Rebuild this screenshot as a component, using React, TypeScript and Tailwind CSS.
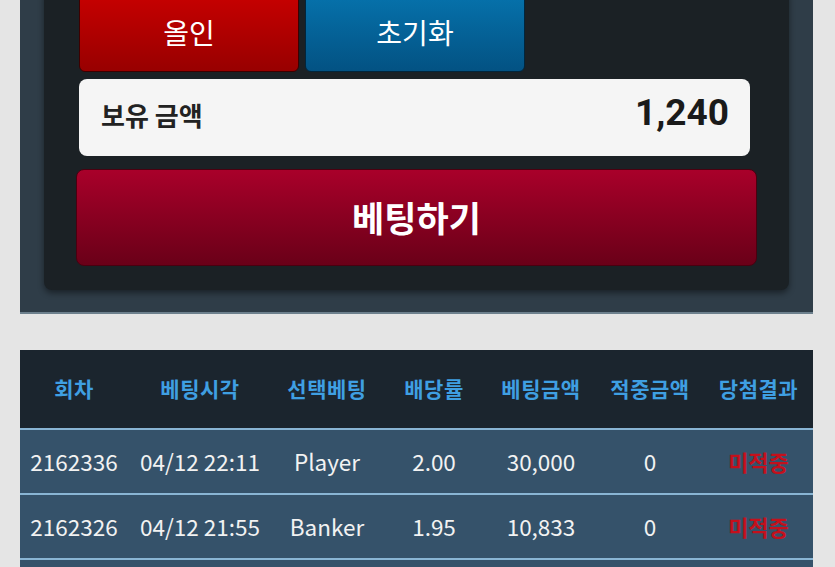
const rows = [
  { round: "2162336", time: "04/12 22:11", pick: "Player", odds: "2.00", bet: "30,000", win: "0", result: "미적중" },
  { round: "2162326", time: "04/12 21:55", pick: "Banker", odds: "1.95", bet: "10,833", win: "0", result: "미적중" },
];

const heads = ["회차", "베팅시각", "선택베팅", "배당률", "베팅금액", "적중금액", "당첨결과"];

const cols = "grid grid-cols-[108px_144px_110px_104px_110px_108px_109px]";

export default function App() {
  return (
    <div className="h-[567px] overflow-hidden bg-[#e5e5e5] font-['Noto_Sans_CJK_KR','Noto_Sans',sans-serif]">
      {/* bet panel */}
      <div className="mx-[20px] w-[793px] bg-[#2f3d48] border-b-2 border-[#6d808d] pb-[22px] -mt-[8px]">
        <div className="mx-[24px] rounded-b-lg bg-[#1b2125] pl-[35px] pr-[39px] pb-[24px] shadow-[0_3px_6px_rgba(0,0,0,0.45)]">
          <div className="flex gap-[6px]">
            <button className="h-[80px] w-[220px] rounded-md border border-[#3d0000] bg-gradient-to-b from-[#c80000] to-[#980000] text-[28px] text-white">
              올인
            </button>
            <button className="h-[80px] w-[220px] rounded-md border border-[#01263d] bg-gradient-to-b from-[#0673ad] to-[#035283] text-[28px] text-white">
              초기화
            </button>
          </div>
          <div className="mt-[7px] flex h-[77px] items-center justify-between rounded-lg bg-[#f5f5f5] pb-[5px] pl-[22px] pr-[21px]">
            <span className="text-[26px] font-bold leading-none text-[#222]">보유 금액</span>
            <span className="mb-[6px] font-['Roboto',sans-serif] text-[37px] font-bold leading-none text-[#1a1a1a]">1,240</span>
          </div>
          <button className="-mx-[3px] mt-[13px] flex h-[97px] w-[681px] items-center justify-center rounded-lg border border-[#4a0010] bg-gradient-to-b from-[#a9002a] to-[#6a0018] text-[35px] font-bold text-white">
            베팅하기
          </button>
        </div>
      </div>

      {/* history table */}
      <div className="mx-[20px] mt-[36px] w-[793px]">
        <div className={`${cols} h-[78px] items-center bg-[#1b252e] text-center text-[21px] font-bold tracking-[0.5px] text-[#3f9fe2]`}>
          {heads.map((h) => (
            <div key={h}>{h}</div>
          ))}
        </div>
        {rows.map((r) => (
          <div
            key={r.round}
            className={`${cols} h-[65px] items-center border-t-2 border-[#89b5d4] bg-[#35526a] text-center text-[22.5px] text-[#f2f2f2]`}
          >
            <div>{r.round}</div>
            <div>{r.time}</div>
            <div>{r.pick}</div>
            <div>{r.odds}</div>
            <div>{r.bet}</div>
            <div>{r.win}</div>
            <div className="text-[22px] font-bold text-[#c4101c]">{r.result}</div>
          </div>
        ))}
        <div className="h-[65px] border-t-2 border-[#89b5d4] bg-[#35526a]" />
      </div>
    </div>
  );
}
